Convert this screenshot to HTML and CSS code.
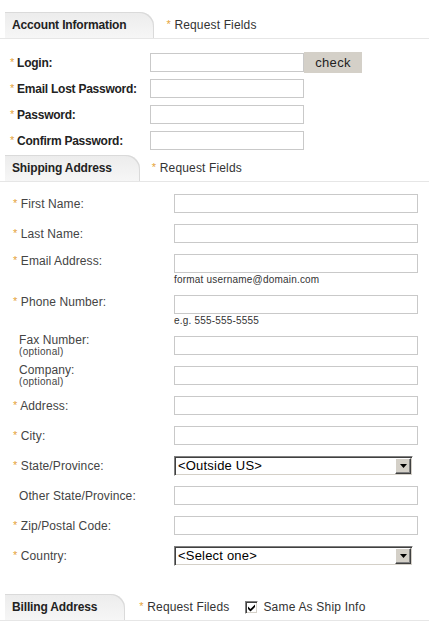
FILE: index.html
```html
<!DOCTYPE html>
<html lang="en">
<head>
    <meta charset="UTF-8">
    <meta name="viewport" content="width=device-width, initial-scale=1.0">
    <title>Registration</title>
    <link rel="stylesheet" href="styles.css">
</head>
<body>
<form class="register">
    <div class="tabbar first">
        <div class="tab">Account Information</div>
        <span class="req-note"><span class="star">*</span> Request Fields</span>
    </div>
    <div class="rows account">
        <div class="row">
            <label class="lbl"><span class="star">*</span> Login:</label>
            <input type="text" class="field">
            <button type="button" class="check">check</button>
        </div>
        <div class="row">
            <label class="lbl"><span class="star">*</span> Email Lost Password:</label>
            <input type="text" class="field">
        </div>
        <div class="row">
            <label class="lbl"><span class="star">*</span> Password:</label>
            <input type="password" class="field">
        </div>
        <div class="row">
            <label class="lbl"><span class="star">*</span> Confirm Password:</label>
            <input type="password" class="field">
        </div>
    </div>

    <div class="tabbar">
        <div class="tab">Shipping Address</div>
        <span class="req-note"><span class="star">*</span> Request Fields</span>
    </div>
    <div class="rows shipping">
        <div class="row">
            <label class="lbl"><span class="star">*</span> First Name:</label>
            <input type="text" class="field">
        </div>
        <div class="row">
            <label class="lbl"><span class="star">*</span> Last Name:</label>
            <input type="text" class="field">
        </div>
        <div class="row with-hint">
            <label class="lbl"><span class="star">*</span> Email Address:</label>
            <div class="cell">
                <input type="text" class="field">
                <div class="hint">format username@domain.com</div>
            </div>
        </div>
        <div class="row with-hint">
            <label class="lbl"><span class="star">*</span> Phone Number:</label>
            <div class="cell">
                <input type="text" class="field">
                <div class="hint">e.g. 555-555-5555</div>
            </div>
        </div>
        <div class="row">
            <label class="lbl plain">Fax Number:<small>(optional)</small></label>
            <input type="text" class="field">
        </div>
        <div class="row">
            <label class="lbl plain">Company:<small>(optional)</small></label>
            <input type="text" class="field">
        </div>
        <div class="row">
            <label class="lbl"><span class="star">*</span> Address:</label>
            <input type="text" class="field">
        </div>
        <div class="row">
            <label class="lbl"><span class="star">*</span> City:</label>
            <input type="text" class="field">
        </div>
        <div class="row">
            <label class="lbl"><span class="star">*</span> State/Province:</label>
            <div class="select">
                <select><option>&lt;Outside US&gt;</option></select>
                <span class="arrow"><svg width="7" height="4" viewBox="0 0 7 4"><path d="M0 0h7L3.5 4z" fill="#000"/></svg></span>
            </div>
        </div>
        <div class="row">
            <label class="lbl plain">Other State/Province:</label>
            <input type="text" class="field">
        </div>
        <div class="row">
            <label class="lbl"><span class="star">*</span> Zip/Postal Code:</label>
            <input type="text" class="field">
        </div>
        <div class="row">
            <label class="lbl"><span class="star">*</span> Country:</label>
            <div class="select">
                <select><option>&lt;Select one&gt;</option></select>
                <span class="arrow"><svg width="7" height="4" viewBox="0 0 7 4"><path d="M0 0h7L3.5 4z" fill="#000"/></svg></span>
            </div>
        </div>
    </div>

    <div class="tabbar billing">
        <div class="tab">Billing Address</div>
        <span class="req-note"><span class="star">*</span> Request Fileds</span>
        <label class="same">
            <span class="box"><svg width="9" height="9" viewBox="0 0 9 9"><path d="M1 3.5l2.5 2.5L8 1.5v2.5L3.5 8.5 1 6z" fill="#000"/></svg></span>
            Same As Ship Info
        </label>
    </div>
</form>
</body>
</html>
```

FILE: styles.css
```css
body {
    margin: 0;
    background: #fff;
    color: #333;
    font-family: "Liberation Sans", Arial, sans-serif;
    font-size: 12px;
}
.tabbar {
    display: flex;
    align-items: center;
    height: 26px;
    margin-top: 5px;
    border-bottom: 1px solid #e6e6e6;
}
.tabbar.first {
    margin-top: 12px;
}
.tabbar.billing {
    margin-top: 29px;
}
.tab {
    height: 26px;
    box-sizing: border-box;
    margin-left: 5px;
    padding: 0 28px 0 7px;
    line-height: 26px;
    font-size: 12px;
    font-weight: bold;
    letter-spacing: -0.15px;
    color: #222;
    background: linear-gradient(to bottom, #ececec, #f6f6f6);
    border-top-right-radius: 14px;
    box-shadow: inset -1px 1px 0 #dadada;
}
.req-note {
    margin-left: 12px;
    color: #333;
    letter-spacing: 0.15px;
}
.billing .req-note {
    margin-left: 14px;
}
.star {
    color: #e5a33a;
    font-size: 11px;
    font-weight: normal;
    position: relative;
    top: -1px;
}
.rows {
    display: flex;
    flex-direction: column;
}
.account {
    padding-top: 14px;
    gap: 7px;
}
.shipping {
    padding-top: 12px;
    gap: 11px;
}
.row {
    display: flex;
    align-items: center;
    height: 19px;
}
.row.with-hint {
    align-items: flex-start;
    height: 30px;
}
.lbl {
    box-sizing: border-box;
    flex: none;
    letter-spacing: 0.1px;
}
.account .lbl {
    width: 150px;
    padding-left: 10px;
    font-size: 12px;
    font-weight: bold;
    letter-spacing: -0.25px;
    color: #222;
}
.shipping .lbl {
    width: 174px;
    padding-left: 13px;
    color: #444;
}
.shipping .lbl.plain {
    padding-left: 19px;
    line-height: 12px;
}
.lbl small {
    display: block;
    font-size: 10px;
    line-height: 11px;
    letter-spacing: 0.3px;
}
.field {
    box-sizing: border-box;
    height: 19px;
    margin: 0;
    padding: 0 3px;
    border: 1px solid #c9c9c9;
    background: #fff;
    font: inherit;
}
.account .field {
    width: 154px;
}
.shipping .field {
    width: 244px;
}
.hint {
    height: 11px;
    font-size: 10px;
    line-height: 13px;
    letter-spacing: 0.2px;
    color: #333;
}
.check {
    width: 58px;
    height: 21px;
    margin: -1px 0;
    padding: 0;
    border: 0;
    background: #d4d0c8;
    color: #222;
    font-family: "Liberation Sans", Arial, sans-serif;
    font-size: 13px;
    letter-spacing: 0.3px;
}
.select {
    box-sizing: border-box;
    display: flex;
    align-items: center;
    width: 239px;
    height: 20px;
    border-top: 1px solid #808080;
    border-left: 1px solid #808080;
    border-right: 1px solid #fff;
    border-bottom: 1px solid #fff;
    box-shadow: inset 1px 1px 0 #404040, inset -1px -1px 0 #d4d0c8;
    background: #fff;
}
.select select {
    flex: 1;
    height: 16px;
    margin: 0 0 0 2px;
    padding: 0 0 0 1px;
    border: 0;
    outline: 0;
    background: transparent;
    -webkit-appearance: none;
    appearance: none;
    font-family: "Liberation Sans", Arial, sans-serif;
    font-size: 13px;
    letter-spacing: 0.2px;
    color: #000;
}
.arrow {
    box-sizing: border-box;
    display: flex;
    align-items: center;
    justify-content: center;
    width: 16px;
    height: 16px;
    margin-right: 1px;
    background: #d4d0c8;
    border-top: 1px solid #fff;
    border-left: 1px solid #fff;
    border-right: 1px solid #404040;
    border-bottom: 1px solid #404040;
    box-shadow: inset -1px -1px 0 #808080;
}
.same {
    display: flex;
    align-items: center;
    margin-left: 16px;
    color: #333;
    letter-spacing: 0.2px;
}
.box {
    box-sizing: border-box;
    display: flex;
    align-items: center;
    justify-content: center;
    width: 13px;
    height: 13px;
    margin-right: 5px;
    background: #fff;
    border-top: 1px solid #808080;
    border-left: 1px solid #808080;
    border-right: 1px solid #fff;
    border-bottom: 1px solid #fff;
    box-shadow: inset 1px 1px 0 #404040, inset -1px -1px 0 #d4d0c8;
}
```
